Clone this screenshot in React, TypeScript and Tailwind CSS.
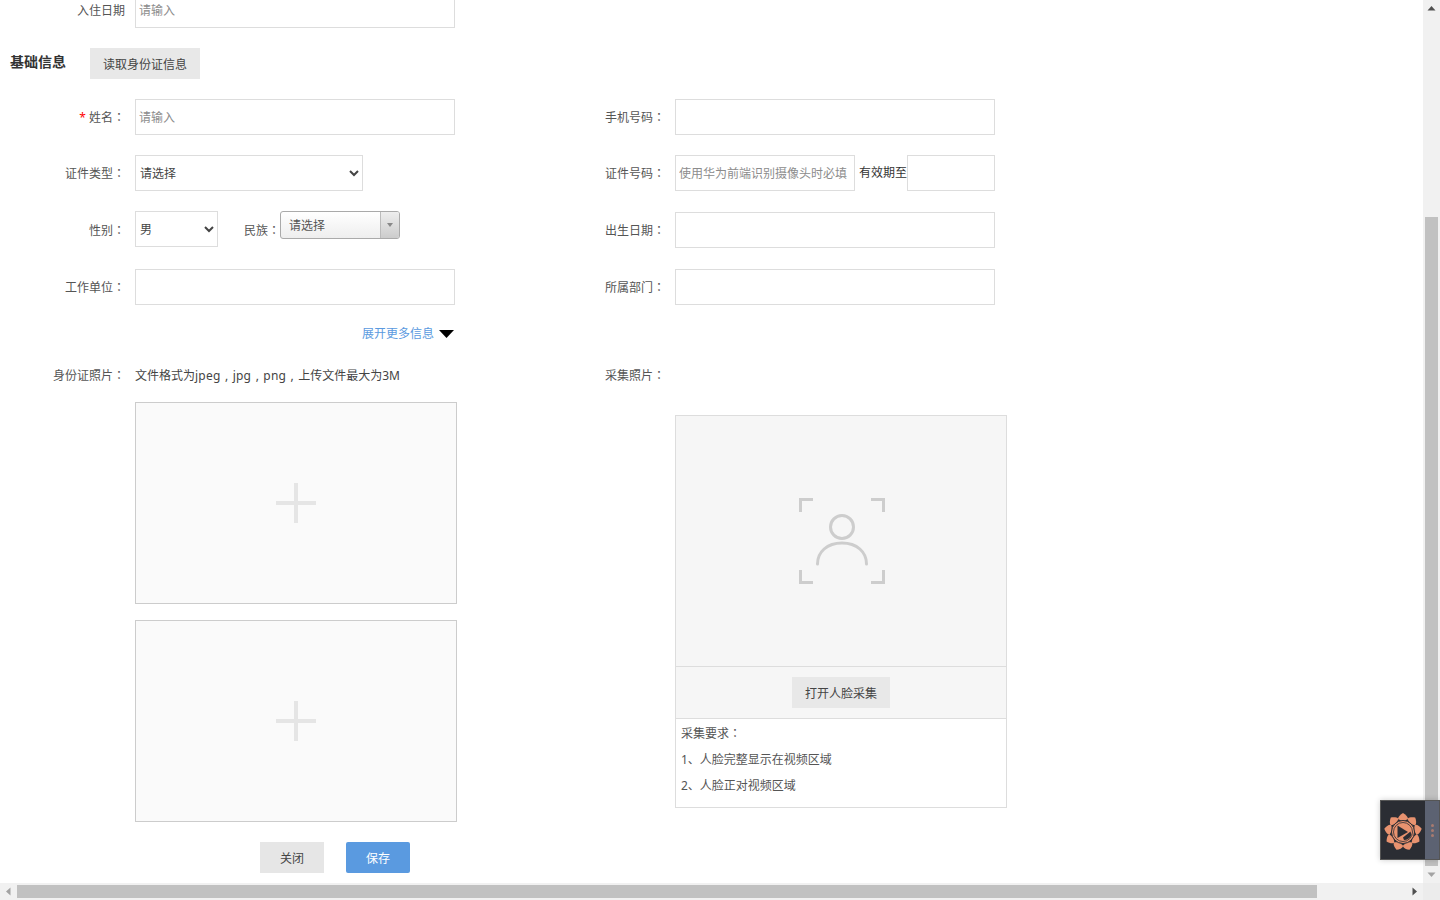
const inputClass =
  "h-9 border border-[#ddd] bg-white pl-[3px] text-xs text-[#555] outline-none placeholder:text-[#8c8c8c]";
const selectClass =
  "h-9 border border-[#ddd] bg-white pl-0 text-xs text-[#444] outline-none";

// full-width punctuation sits centered in the TC font, as in the design
const Punct = ({ children }: { children: string }) => (
  <span className="font-['Noto_Sans_CJK_TC',sans-serif] leading-none">{children}</span>
);

const Comma = () => <span className="inline-block w-3 text-center leading-none">,</span>;

const Label = ({
  children,
  required,
  colon,
}: {
  children: string;
  required?: boolean;
  colon?: boolean;
}) => (
  <label className="block h-[18px] w-[125px] shrink-0 text-right text-xs leading-[20px] text-[#555]">
    {required && <span className="mr-[3px] text-[#f00]">*</span>}
    {children}
    {colon && <Punct>：</Punct>}
  </label>
);

const FormRow = ({
  left,
  right,
  className,
}: {
  left: React.ReactNode;
  right: React.ReactNode;
  className?: string;
}) => (
  <div className={`flex items-center ${className ?? ""}`}>
    <div className="flex w-[540px] shrink-0 items-center">{left}</div>
    <div className="flex items-center">{right}</div>
  </div>
);

const PlusBox = ({ className }: { className?: string }) => (
  <div
    className={`flex h-[202px] w-[322px] items-center justify-center border border-[#ccc] bg-[#fafafa] ${className ?? ""}`}
  >
    <svg width="40" height="40" viewBox="0 0 40 40">
      <path d="M20 0V40M0 20H40" stroke="#e5e5e5" strokeWidth="4" fill="none" />
    </svg>
  </div>
);

const FaceIcon = () => (
  <svg width="86" height="86" viewBox="0 0 86 86" fill="none" stroke="#cdcdcd" strokeWidth="3">
    <path d="M14 1.5H1.5V14M72 1.5H84.5V14M1.5 72V84.5H14M84.5 72V84.5H72" />
    <circle cx="43" cy="29" r="11.5" />
    <path d="M18.5 66C18.5 54 28 45 43 45C58 45 67.5 54 67.5 66" strokeLinecap="round" />
  </svg>
);

const SunLogo = () => (
  <svg width="40" height="40" viewBox="0 0 40 40">
    {[0, 40, 80, 120, 160, 200, 240, 280, 320].map((deg) => (
      <path
        key={deg}
        d="M20 1C22.5 2.5 25 4.5 25 7C23 8 21.5 8.5 20 8.5C18.5 8.5 17 8 15 7C15 4.5 17.5 2.5 20 1Z"
        fill="#e8926f"
        transform={`rotate(${deg} 20 20)`}
      />
    ))}
    <circle cx="20" cy="20" r="11.5" fill="#e8926f" stroke="#2b2d33" strokeWidth="1" />
    <circle cx="20" cy="20" r="9.5" fill="none" stroke="#2b2d33" strokeWidth="0.8" />
    <path d="M14.5 13.5L25 20L14.5 26Z" fill="#2b2d33" />
    <path d="M27.5 19.5L28.5 23C27 26.5 24 28 21 28L20 25.5Z" fill="#2b2d33" />
  </svg>
);

const Arrow = ({ d, fill }: { d: string; fill: string }) => (
  <svg width="9" height="9" viewBox="0 0 9 9">
    <path d={d} fill={fill} />
  </svg>
);

const App = () => {
  return (
    <div className="relative flex h-[900px] w-full flex-col overflow-hidden bg-white font-['Noto_Sans','Noto_Sans_CJK_SC',sans-serif]">
      <div className="flex h-[883px] shrink-0">
        <main className="min-w-0 flex-1 overflow-hidden">
          <div className="-mt-2 flex items-center">
            <Label>入住日期</Label>
            <input className={`ml-[10px] w-[320px] ${inputClass}`} placeholder="请输入" />
          </div>

          <div className="mt-5 flex h-[31px] items-center pl-[10px]">
            <h3 className="w-20 pb-1 text-sm font-bold text-[#333]">基础信息</h3>
            <button className="h-[31px] w-[110px] bg-[#e8e8e8] pt-[2px] text-xs text-[#444]">读取身份证信息</button>
          </div>

          <FormRow
            className="mt-5"
            left={
              <>
                <Label required colon>姓名</Label>
                <input className={`ml-[10px] w-[320px] ${inputClass}`} placeholder="请输入" />
              </>
            }
            right={
              <>
                <Label colon>手机号码</Label>
                <input className={`ml-[10px] w-[320px] ${inputClass}`} />
              </>
            }
          />

          <FormRow
            className="mt-5"
            left={
              <>
                <Label colon>证件类型</Label>
                <select className={`ml-[10px] w-[228px] ${selectClass}`}>
                  <option>请选择</option>
                </select>
              </>
            }
            right={
              <>
                <Label colon>证件号码</Label>
                <input
                  className={`ml-[10px] w-[180px] ${inputClass}`}
                  placeholder="使用华为前端识别摄像头时必填"
                />
                <span className="ml-1 pb-px text-xs text-[#333]">有效期至</span>
                <input className={`w-[88px] ${inputClass}`} />
              </>
            }
          />

          <FormRow
            className="mt-[21px] items-start"
            left={
              <>
                <Label colon>性别</Label>
                <select className={`-mt-px ml-[10px] w-[83px] ${selectClass}`}>
                  <option>男</option>
                </select>
                <span className="ml-[26px] h-[18px] w-9 shrink-0 whitespace-nowrap text-xs leading-[20px] text-[#555]">
                  民族<Punct>：</Punct>
                </span>
                <div className="-mt-[9px] flex h-7 w-[120px] overflow-hidden rounded-[3px] border border-[#aaa] bg-gradient-to-b from-white to-[#eee]">
                  <span className="flex-1 pl-2 text-xs leading-[28px] text-[#555]">请选择</span>
                  <span className="flex w-[19px] items-center justify-center border-l border-[#bbb] bg-gradient-to-b from-[#eee] to-[#ccc]">
                    <svg width="6" height="4" viewBox="0 0 6 4">
                      <path d="M0 0H6L3 4Z" fill="#888" />
                    </svg>
                  </span>
                </div>
              </>
            }
            right={
              <>
                <Label colon>出生日期</Label>
                <input className={`ml-[10px] w-[320px] ${inputClass}`} />
              </>
            }
          />

          <FormRow
            className="mt-[21px]"
            left={
              <>
                <Label colon>工作单位</Label>
                <input className={`ml-[10px] w-[320px] ${inputClass}`} />
              </>
            }
            right={
              <>
                <Label colon>所属部门</Label>
                <input className={`ml-[10px] w-[320px] ${inputClass}`} />
              </>
            }
          />

          <div className="mt-5 flex h-[18px] w-[455px] items-center justify-end">
            <a className="text-xs text-[#5a9ae0]">展开更多信息</a>
            <svg className="ml-[5px] mr-px" width="15" height="8" viewBox="0 0 15 8">
              <path d="M0 0H15L7.5 8Z" fill="#000" />
            </svg>
          </div>

          <div className="mt-[23px] flex items-start">
            <div className="w-[540px] shrink-0">
              <div className="flex">
                <Label colon>身份证照片</Label>
                <span className="ml-[10px] h-[18px] text-xs leading-[20px] text-[#444]">
                  文件格式为
                  <span className="tracking-[0.25px]">jpeg</span>
                  <Comma />
                  <span className="tracking-[0.25px]">jpg</span>
                  <Comma />
                  <span className="tracking-[0.25px]">png</span>
                  <Comma />
                  上传文件最大为3M
                </span>
              </div>
              <PlusBox className="ml-[135px] mt-[18px]" />
              <PlusBox className="ml-[135px] mt-4" />
              <div className="ml-[260px] mt-5 flex gap-[22px]">
                <button className="h-[31px] w-16 bg-[#e6e6e6] pt-[2px] text-xs text-[#444]">关闭</button>
                <button className="h-[31px] w-16 rounded-[2px] bg-[#5a9ae0] pt-[2px] text-xs text-white">保存</button>
              </div>
            </div>
            <div>
              <Label colon>采集照片</Label>
              <div className="ml-[135px] mt-[31px] w-[332px] border border-[#ddd] text-xs text-[#555]">
                <div className="flex h-[250px] items-start justify-center bg-[#f6f6f6] pl-[2px] pt-[82px]">
                  <FaceIcon />
                </div>
                <div className="flex h-[53px] justify-center border-y border-[#ddd] bg-[#f6f6f6] pt-[10px]">
                  <button className="h-[31px] w-[98px] bg-[#e8e8e8] pt-[2px] text-[#444]">打开人脸采集</button>
                </div>
                <div className="h-[88px] pl-[5px] pt-[2px] leading-[26px]">
                  <p>
                    采集要求<Punct>：</Punct>
                  </p>
                  <p>1、人脸完整显示在视频区域</p>
                  <p>2、人脸正对视频区域</p>
                </div>
              </div>
            </div>
          </div>
        </main>

        <div className="flex w-[17px] shrink-0 flex-col items-center bg-[#f1f1f1]">
          <div className="flex h-[17px] items-center justify-center">
            <Arrow d="M4.5 2L8.5 6.5H0.5Z" fill="#505050" />
          </div>
          <div className="mt-[200px] h-[649px] w-[13px] bg-[#c1c1c1]" />
          <div className="flex flex-1 items-center justify-center">
            <Arrow d="M4.5 7L0.5 2.5H8.5Z" fill="#a3a3a3" />
          </div>
        </div>
      </div>

      <div className="flex h-[17px] shrink-0 items-center bg-[#f1f1f1]">
        <div className="flex w-[17px] justify-center">
          <Arrow d="M2 4.5L6.5 0.5V8.5Z" fill="#a3a3a3" />
        </div>
        <div className="h-[13px] w-[1300px] bg-[#c1c1c1]" />
        <div className="flex flex-1 justify-end pr-1">
          <Arrow d="M7 4.5L2.5 0.5V8.5Z" fill="#505050" />
        </div>
        <div className="h-full w-[17px] shrink-0 bg-[#ececec]" />
      </div>

      <div className="absolute left-[1380px] top-[800px] flex h-[60px] w-[60px] border border-[#555] bg-[#2b2d33] shadow-[0_0_6px_rgba(0,0,0,0.2)]">
        <div className="flex w-[44px] items-center justify-center pt-[3px]">
          <SunLogo />
        </div>
        <div className="flex flex-1 flex-col items-center justify-center gap-[2px] bg-[#5c6272]">
          <span className="h-[3px] w-[3px] rounded-full bg-[#a87a70]" />
          <span className="h-[3px] w-[3px] rounded-full bg-[#a87a70]" />
          <span className="h-[3px] w-[3px] rounded-full bg-[#a87a70]" />
        </div>
      </div>
    </div>
  );
};

export default App;
